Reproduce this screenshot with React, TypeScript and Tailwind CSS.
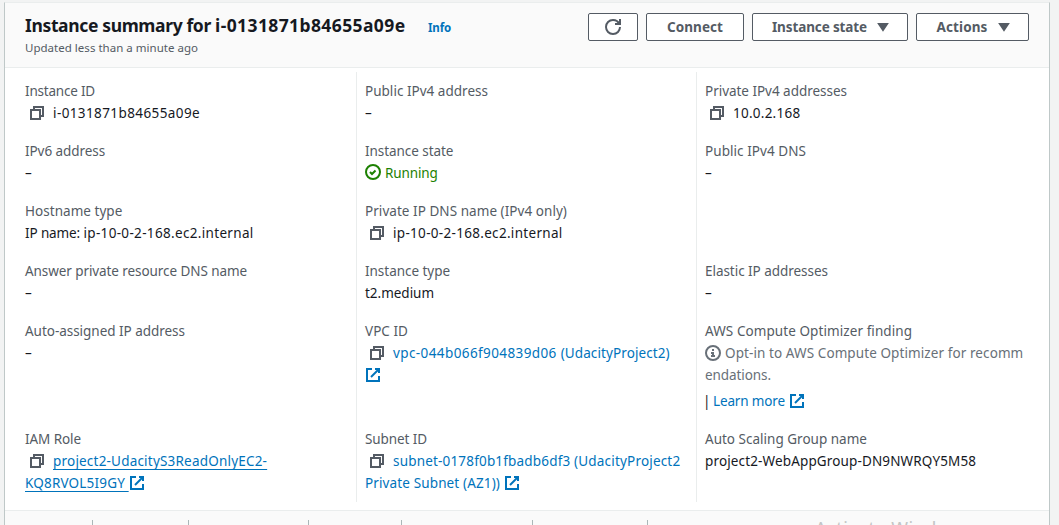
import type { ReactNode } from 'react';

const iconBase = 'inline-block h-4 w-4 shrink-0 fill-none stroke-current stroke-2';

function CopyIcon() {
  return (
    <svg viewBox="0 0 16 16" className="mt-[3px] mr-2 ml-1 inline-block h-4 w-4 fill-none stroke-[#545b64] stroke-2 align-top">
      <path d="M2 5h9v9H2z" />
      <path d="M5 5V2h9v9h-3" />
    </svg>
  );
}

function ExternalIcon() {
  return (
    <svg viewBox="0 0 16 16" className={`${iconBase} mt-[3px] align-top text-[#0073bb]`}>
      <path d="M10 2h4v4" />
      <path d="m6 10 8-8" />
      <path d="M14 9.048V14H2V2h5" />
    </svg>
  );
}

function CheckIcon() {
  return (
    <svg viewBox="0 0 16 16" className={`${iconBase} mt-0.5 mr-1 align-top`}>
      <circle cx="8" cy="8" r="7" />
      <path d="m5 8 2 2 3.521-3.521" />
    </svg>
  );
}

function InfoIcon() {
  return (
    <svg viewBox="0 0 16 16" className={`${iconBase} mt-[3px] mr-1 align-top`}>
      <circle cx="8" cy="8" r="7" />
      <path d="M8 11V8H6" />
      <path d="M10 11H6" />
      <path d="M8 6V4" />
    </svg>
  );
}

function RefreshIcon() {
  return (
    <svg viewBox="0 0 16 16" className={iconBase}>
      <path d="M10 5h5V0" />
      <path d="M15 8a6.957 6.957 0 0 1-7 7 6.957 6.957 0 0 1-7-7 6.957 6.957 0 0 1 7-7 6.87 6.87 0 0 1 6.3 4" />
    </svg>
  );
}

function Caret() {
  return (
    <svg viewBox="0 0 16 16" className="h-4 w-4 fill-current stroke-current stroke-2">
      <path d="M4 5h8l-4 6-4-6z" />
    </svg>
  );
}

function Button({ className, children }: { className: string; children: ReactNode }) {
  return (
    <button
      type="button"
      className={`flex h-7 items-center justify-center rounded-[2px] border border-[#545b64] bg-white text-[13.5px] leading-[22px] font-bold text-[#545b64] ${className}`}
    >
      {children}
    </button>
  );
}

function Field({ label, track, tall, children }: { label: string; track: string; tall?: boolean; children?: ReactNode }) {
  return (
    <div className={tall ? 'h-[108px]' : 'h-[60px]'}>
      <div className={`text-[#545b64] ${track}`}>{label}</div>
      <div className="whitespace-nowrap">{children}</div>
    </div>
  );
}

const column = 'h-[430px] pt-2 pl-2';

export default function App() {
  return (
    <div className="h-[525px] overflow-hidden bg-[#f2f3f3] pt-0.5 font-['Noto_Sans',sans-serif] text-[13.5px] leading-[22px] text-[#16191f]">
      <div className="relative ml-1 h-[523px] w-[1046px] border-x border-t border-x-[#bfc8c8] border-t-[#eaeded] bg-white">
        <header className="flex h-[65px] justify-between border-b border-[#eaeded] bg-[#fafafa] pr-5 pl-5">
          <div className="pt-[11px]">
            <div className="flex h-[22px] items-baseline">
              <h1 className="w-[380px] text-[17.5px] leading-[22px] font-bold whitespace-nowrap">
                <span className="tracking-[-0.36px]">Instance summary for </span>
                <span className="tracking-[0.39px]">i-0131871b84655a09e</span>
              </h1>
              <a className="ml-[23px] text-[11.5px] leading-[22px] font-bold tracking-[-0.15px] text-[#0073bb]">Info</a>
            </div>
            <p className="mt-px text-[11.5px] leading-[22px] tracking-[0.02px] text-[#545b64]">Updated less than a minute ago</p>
          </div>
          <div className="flex gap-2 pt-2.5">
            <Button className="w-[50px]"><RefreshIcon /></Button>
            <Button className="w-[98px] tracking-[0.07px]">Connect</Button>
            <Button className="w-[156px] gap-2 pl-[3px] tracking-[-0.12px]">Instance state<Caret /></Button>
            <Button className="w-[113px] gap-2 pl-[3px] tracking-[0.12px]">Actions<Caret /></Button>
          </div>
        </header>

        <main className="grid h-[442px] grid-cols-[351px_340px_1fr] pt-1">
          <div className="h-[430px] pt-2 pl-5">
            <Field label="Instance ID" track="tracking-[-0.2px]">
              <CopyIcon /><span className="tracking-[0.4px]">i-0131871b84655a09e</span>
            </Field>
            <Field label="IPv6 address" track="tracking-[-0.07px]">–</Field>
            <Field label="Hostname type" track="tracking-[0.04px]">
              <span className="tracking-[-0.12px]">IP name: </span>
              <span className="tracking-[0.33px]">ip-10-0-2-168.ec2.internal</span>
            </Field>
            <Field label="Answer private resource DNS name" track="tracking-[-0.08px]">–</Field>
            <Field tall label="Auto-assigned IP address" track="tracking-[-0.03px]">–</Field>
            <Field label="IAM Role" track="tracking-[-0.08px]">
              <CopyIcon />
              <a className="text-[#0073bb] underline underline-offset-[3px]">
                <span className="tracking-[0.2px]">project2-UdacityS3ReadOnlyEC2-</span><br />
                <span className="tracking-[0.18px]">KQ8RVOL5I9GY </span>
              </a>
              <ExternalIcon />
            </Field>
          </div>

          <div className={`${column} border-l border-[#eaeded]`}>
            <Field label="Public IPv4 address" track="tracking-[0.02px]">–</Field>
            <Field label="Instance state" track="tracking-[-0.06px]">
              <span className="tracking-[-0.12px] text-[#1d8102]"><CheckIcon />Running</span>
            </Field>
            <Field label="Private IP DNS name (IPv4 only)" track="tracking-[0.05px]">
              <CopyIcon /><span className="tracking-[0.31px]">ip-10-0-2-168.ec2.internal</span>
            </Field>
            <Field label="Instance type" track="tracking-[-0.03px]">
              <span className="tracking-[-0.02px]">t2.medium</span>
            </Field>
            <Field tall label="VPC ID" track="tracking-[0.04px]">
              <CopyIcon />
              <a className="text-[#0073bb]">
                <span className="tracking-[0.4px]">vpc-044b066f904839d06 </span>
                <span className="tracking-[0.1px]">(UdacityProject2)</span>
              </a><br />
              <ExternalIcon />
            </Field>
            <Field label="Subnet ID" track="tracking-[-0.09px]">
              <CopyIcon />
              <a className="text-[#0073bb]">
                <span className="tracking-[0.18px]">subnet-0178f0b1fbadb6df3 (UdacityProject2</span><br />
                <span className="mr-1 tracking-[0.13px]">Private Subnet (AZ1))</span>
                <ExternalIcon />
              </a>
            </Field>
          </div>

          <div className={`${column} border-l border-[#eaeded]`}>
            <Field label="Private IPv4 addresses" track="tracking-[-0.03px]">
              <CopyIcon /><span className="tracking-[0.25px]">10.0.2.168</span>
            </Field>
            <Field label="Public IPv4 DNS" track="tracking-[0.06px]">–</Field>
            <div className="h-[60px]" />
            <Field label="Elastic IP addresses" track="tracking-[-0.04px]">–</Field>
            <Field tall label="AWS Compute Optimizer finding" track="tracking-[0.08px]">
              <div className="text-[#687078]">
                <InfoIcon /><span className="tracking-[0.09px]">Opt-in to AWS Compute Optimizer for recomm</span><br />
                <span className="tracking-[-0.08px]">endations.</span>
              </div>
              <div className="flex pt-1">
                <span className="-ml-0.5 w-2.5">|</span>
                <a className="mr-1 tracking-[-0.14px] text-[#0073bb]">Learn more</a>
                <ExternalIcon />
              </div>
            </Field>
            <Field label="Auto Scaling Group name" track="tracking-[0.01px]">
              <span className="tracking-[0.14px]">project2-WebAppGroup-DN9NWRQY5M58</span>
            </Field>
          </div>
        </main>

        <footer className="flex h-[15px] border-t border-[#eaeded] bg-[#fafafa] pt-[9px]">
          <div className="w-[88px] border-r border-[#aab7b8]" />
          <div className="w-24 border-r border-[#aab7b8]" />
          <div className="w-[120px] border-r border-[#aab7b8]" />
          <div className="w-[93px] border-r border-[#aab7b8]" />
          <div className="w-[131px] border-r border-[#aab7b8]" />
          <div className="w-[115px] border-r border-[#aab7b8]" />
        </footer>
        <div className="absolute top-[510px] left-[810px] h-[13px] overflow-hidden text-[18px] leading-[30px] tracking-[0.5px] whitespace-nowrap text-[#c3c5c5]">Activate Wind</div>
      </div>
    </div>
  );
}
